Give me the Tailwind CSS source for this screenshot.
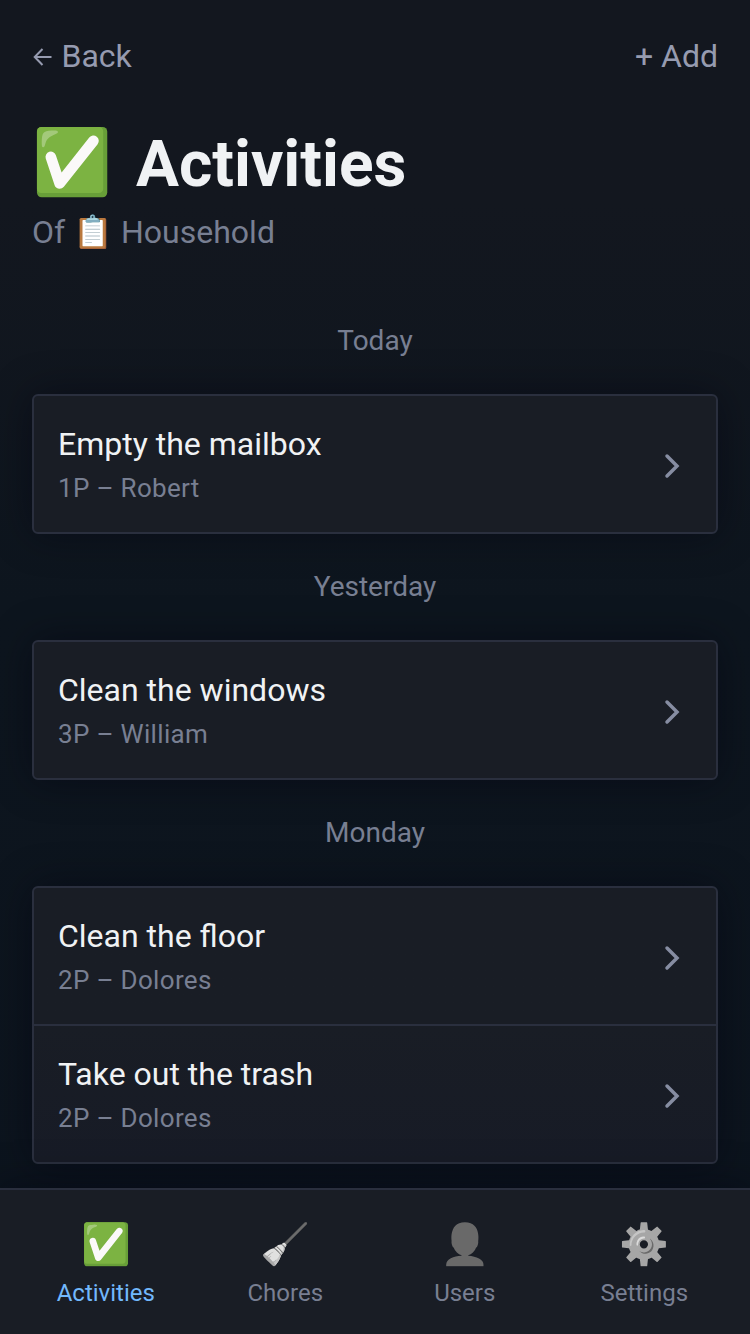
<!DOCTYPE html>
<html lang="en">
<head>
<meta charset="utf-8">
<title>Activities</title>
<script src="https://cdn.jsdelivr.net/npm/@tailwindcss/browser@4"></script>
</head>
<body class="flex h-[1334px] flex-col overflow-hidden bg-linear-to-b from-[#13171f] from-15% via-[#0d151e] via-45% to-[#0c141e] font-[Roboto,sans-serif] text-[32px] text-[#f0f2f4]">
<header class="flex h-[112px] items-center justify-between px-8 text-[#969bb0]">
  <a class="flex items-center">
    <svg class="mt-0.5 mr-[8.5px] ml-px h-5 w-5" viewBox="0 0 20 20" fill="none" stroke="currentColor" stroke-width="2"><path d="M18.5 10H2M9.5 2L1.7 10L9.5 18"/></svg>
    <span>Back</span>
  </a>
  <a>+ Add</a>
</header>
<main class="flex flex-1 flex-col px-8">
  <h1 class="flex h-[100px] items-center text-[64px] font-bold"><span class="w-[104px] pt-0.5">✅</span><span class="pt-1.5">Activities</span></h1>
  <p class="h-[70px] leading-[40px] text-[#787f92]">Of 📋 Household</p>

  <h2 class="mt-[35px] mb-[29px] text-center text-[28px] leading-[48px] text-[#787f92]">Today</h2>
  <ul class="rounded-[6px] border-2 border-[#2a2f3e] bg-[#191d25] shadow-[0_0_40px_rgba(2,4,16,0.45)]">
    <li class="flex h-[136px] items-center justify-between pr-9 pl-6">
      <div class="pb-px"><p class="leading-[48px]">Empty the mailbox</p><p class="text-[26px] leading-[40px] tracking-[0.32px] text-[#787f92]">1P – Robert</p></div>
      <svg class="mt-1 h-7 w-4" viewBox="0 0 16 28" fill="none" stroke="#868da2" stroke-width="3.5" stroke-linecap="round"><path d="M3 4L13 14L3 24"/></svg>
    </li>
  </ul>

  <h2 class="my-[29px] text-center text-[28px] leading-[48px] text-[#787f92]">Yesterday</h2>
  <ul class="rounded-[6px] border-2 border-[#2a2f3e] bg-[#191d25] shadow-[0_0_40px_rgba(2,4,16,0.45)]">
    <li class="flex h-[136px] items-center justify-between pr-9 pl-6">
      <div class="pb-px"><p class="leading-[48px]">Clean the windows</p><p class="text-[26px] leading-[40px] tracking-[0.32px] text-[#787f92]">3P – William</p></div>
      <svg class="mt-1 h-7 w-4" viewBox="0 0 16 28" fill="none" stroke="#868da2" stroke-width="3.5" stroke-linecap="round"><path d="M3 4L13 14L3 24"/></svg>
    </li>
  </ul>

  <h2 class="my-[29px] text-center text-[28px] leading-[48px] text-[#787f92]">Monday</h2>
  <ul class="rounded-[6px] border-2 border-[#2a2f3e] bg-linear-to-b from-[#191d25] from-50% to-[#171b26] shadow-[0_0_40px_rgba(2,4,16,0.45)]">
    <li class="flex h-[136px] items-center justify-between pr-9 pl-6">
      <div class="pb-px"><p class="leading-[48px]">Clean the floor</p><p class="text-[26px] leading-[40px] tracking-[0.32px] text-[#787f92]">2P – Dolores</p></div>
      <svg class="mt-1 h-7 w-4" viewBox="0 0 16 28" fill="none" stroke="#868da2" stroke-width="3.5" stroke-linecap="round"><path d="M3 4L13 14L3 24"/></svg>
    </li>
    <li class="flex h-[138px] items-center justify-between border-t-2 border-[#2a2f3e] pr-9 pl-6">
      <div class="pb-px"><p class="leading-[48px]">Take out the trash</p><p class="text-[26px] leading-[40px] tracking-[0.32px] text-[#787f92]">2P – Dolores</p></div>
      <svg class="mt-1 h-7 w-4" viewBox="0 0 16 28" fill="none" stroke="#868da2" stroke-width="3.5" stroke-linecap="round"><path d="M3 4L13 14L3 24"/></svg>
    </li>
  </ul>
</main>
<nav class="grid h-[146px] shrink-0 grid-cols-4 border-t-2 border-[#2a2f3e] bg-[#191d25] px-4 pt-[25px] text-center text-[24px] text-[#787f92] shadow-[0_0_40px_rgba(2,4,16,0.45)]">
  <a class="text-[#72b8fc]"><span class="block text-[40px] leading-[60px]">✅</span><span class="block leading-[36px]">Activities</span></a>
  <a><span class="block text-[40px] leading-[60px] grayscale">🧹</span><span class="block leading-[36px]">Chores</span></a>
  <a><span class="block text-[40px] leading-[60px] grayscale">👤</span><span class="block leading-[36px]">Users</span></a>
  <a><span class="block text-[40px] leading-[60px] grayscale">⚙️</span><span class="block leading-[36px]">Settings</span></a>
</nav>
</body>
</html>
